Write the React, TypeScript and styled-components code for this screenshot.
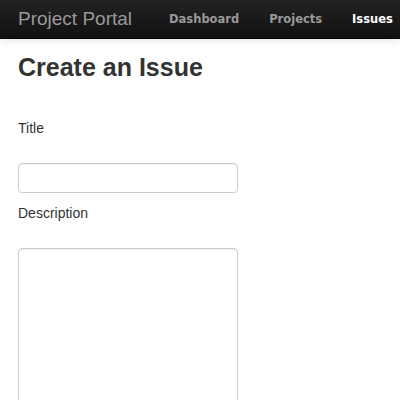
import React from "react";
import styled, { createGlobalStyle } from "styled-components";

const Global = createGlobalStyle`
  html, body { margin: 0; padding: 0; background: #fff; }
  body { font-family: "Liberation Sans", Arial, sans-serif; color: #333; }
`;

const NavBar = styled.header`
  height: 38px;
  background: linear-gradient(to bottom, #222 0%, #111 100%);
  border-bottom: 1px solid #0a0a0a;
  box-shadow: 0 1px 8px rgba(0,0,0,0.12);
  display: flex;
  align-items: center;
  padding-left: 18px;
  white-space: nowrap;
  overflow: hidden;
`;

const Brand = styled.div`
  font-family: "Liberation Sans", Arial, sans-serif;
  font-size: 19px;
  color: #999;
  margin-right: 22px;
`;

const NavLink = styled.a<{ $active?: boolean }>`
  font-family: "DejaVu Sans", Verdana, sans-serif;
  font-size: 11.5px;
  font-weight: bold;
  color: ${(p) => (p.$active ? "#fff" : "#999")};
  text-decoration: none;
  padding: 0 15px;
`;

const Main = styled.main`
  padding: 13px 18px 0;
`;

const Heading = styled.h1`
  margin: 0;
  font-size: 25px;
  font-weight: bold;
  line-height: 30px;
  color: #333;
`;

const Form = styled.form`
  display: flex;
  flex-direction: column;
  margin-top: 36px;
`;

const Label = styled.label`
  font-size: 14px;
  line-height: 20px;
  color: #333;
`;

const Input = styled.input`
  box-sizing: border-box;
  width: 220px;
  height: 30px;
  margin-top: 25px;
  border: 1px solid #ccc;
  border-radius: 4px;
  box-shadow: inset 0 1px 1px rgba(0,0,0,0.075);
  margin-bottom: 10px;
`;

const TextArea = styled.textarea`
  box-sizing: border-box;
  width: 220px;
  height: 200px;
  margin-top: 25px;
  border: 1px solid #ccc;
  border-radius: 4px;
  box-shadow: inset 0 1px 1px rgba(0,0,0,0.075);
  resize: none;
`;

export default function App() {
  return (
    <>
      <Global />
      <NavBar>
        <Brand>Project Portal</Brand>
        <NavLink href="#">Dashboard</NavLink>
        <NavLink href="#">Projects</NavLink>
        <NavLink href="#" $active>Issues</NavLink>
      </NavBar>
      <Main>
        <Heading>Create an Issue</Heading>
        <Form>
          <Label>Title</Label>
          <Input type="text" />
          <Label>Description</Label>
          <TextArea />
        </Form>
      </Main>
    </>
  );
}
